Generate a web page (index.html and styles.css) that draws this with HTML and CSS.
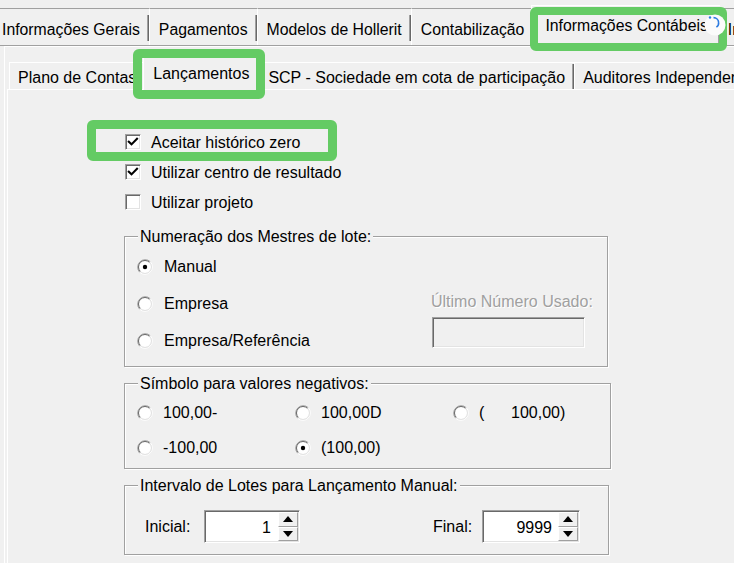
FILE: index.html
```html
<!DOCTYPE html>
<html lang="pt-BR">
<head>
<meta charset="utf-8">
<title>Informações Contábeis</title>
<link rel="stylesheet" href="styles.css">
</head>
<body>
<svg class="defs" width="0" height="0" aria-hidden="true">
  <defs>
    <!-- classic sunken radio button -->
    <symbol id="radio" viewBox="0 0 16 16">
      <circle cx="8" cy="8" r="6" fill="#fff"/>
      <path d="M2.7 13.3A7.5 7.5 0 0 1 13.3 2.7" fill="none" stroke="#a0a0a0"/>
      <path d="M3.4 12.6A6.5 6.5 0 0 1 12.6 3.4" fill="none" stroke="#696969"/>
      <path d="M13.3 2.7A7.5 7.5 0 0 1 2.7 13.3" fill="none" stroke="#ffffff"/>
      <path d="M12.6 3.4A6.5 6.5 0 0 1 3.4 12.6" fill="none" stroke="#e3e3e3"/>
    </symbol>
    <symbol id="radio-on" viewBox="0 0 16 16">
      <use href="#radio"/>
      <circle cx="8" cy="8" r="2.2" fill="#000"/>
    </symbol>
    <symbol id="tick" viewBox="0 0 16 16">
      <path d="M3.2 7.6 6.3 10.7 12.6 4.2" fill="none" stroke="#000" stroke-width="2.4" stroke-linecap="square"/>
    </symbol>
    <symbol id="arrow-up" viewBox="0 0 10 6">
      <path d="M0 6 5 0 10 6Z" fill="#000"/>
    </symbol>
    <symbol id="arrow-down" viewBox="0 0 10 6">
      <path d="M0 0 10 0 5 6Z" fill="#000"/>
    </symbol>
  </defs>
</svg>

<div class="screen">
  <nav class="tabbar tabbar-main">
    <span class="tab tab-first">Informações Gerais</span>
    <span class="tab">Pagamentos</span>
    <span class="tab">Modelos de Hollerit</span>
    <span class="tab">Contabilização</span>
    <span class="tab tab-active">Informações Contábeis</span>
    <span class="tab">Informações Fiscais</span>
  </nav>

  <section class="page">
    <nav class="tabbar tabbar-sub">
      <span class="tab tab-first">Plano de Contas</span>
      <span class="tab tab-active">Lançamentos</span>
      <span class="tab">SCP - Sociedade em cota de participação</span>
      <span class="tab">Auditores Independentes</span>
    </nav>

    <div class="sheet">
      <label class="check">
        <span class="checkbox"><svg><use href="#tick"/></svg></span>
        <span class="caption">Aceitar histórico zero</span>
      </label>
      <label class="check">
        <span class="checkbox"><svg><use href="#tick"/></svg></span>
        <span class="caption">Utilizar centro de resultado</span>
      </label>
      <label class="check">
        <span class="checkbox"></span>
        <span class="caption">Utilizar projeto</span>
      </label>

      <fieldset class="group group-lote">
        <legend>Numeração dos Mestres de lote:</legend>
        <div class="lote-body">
          <div class="radio-list">
            <label class="radio"><svg class="radio-icon"><use href="#radio-on"/></svg><span class="caption">Manual</span></label>
            <label class="radio"><svg class="radio-icon"><use href="#radio"/></svg><span class="caption">Empresa</span></label>
            <label class="radio"><svg class="radio-icon"><use href="#radio"/></svg><span class="caption">Empresa/Referência</span></label>
          </div>
          <div class="last-used">
            <span class="caption caption-disabled">Último Número Usado:</span>
            <div class="edit edit-disabled"></div>
          </div>
        </div>
      </fieldset>

      <fieldset class="group group-neg">
        <legend>Símbolo para valores negativos:</legend>
        <div class="neg-body">
          <label class="radio"><svg class="radio-icon"><use href="#radio"/></svg><span class="caption">100,00-</span></label>
          <label class="radio"><svg class="radio-icon"><use href="#radio"/></svg><span class="caption">100,00D</span></label>
          <label class="radio"><svg class="radio-icon"><use href="#radio"/></svg><span class="caption caption-pre">(      100,00)</span></label>
          <label class="radio"><svg class="radio-icon"><use href="#radio"/></svg><span class="caption">-100,00</span></label>
          <label class="radio"><svg class="radio-icon"><use href="#radio-on"/></svg><span class="caption">(100,00)</span></label>
        </div>
      </fieldset>

      <fieldset class="group group-interval">
        <legend>Intervalo de Lotes para Lançamento Manual:</legend>
        <div class="interval">
          <span class="caption">Inicial:</span>
          <div class="spin spin-start">
            <span class="spin-value">1</span>
            <span class="spin-buttons">
              <span class="spin-btn"><svg><use href="#arrow-up"/></svg></span>
              <span class="spin-btn"><svg><use href="#arrow-down"/></svg></span>
            </span>
          </div>
          <span></span>
          <span class="caption">Final:</span>
          <div class="spin spin-end">
            <span class="spin-value">9999</span>
            <span class="spin-buttons">
              <span class="spin-btn"><svg><use href="#arrow-up"/></svg></span>
              <span class="spin-btn"><svg><use href="#arrow-down"/></svg></span>
            </span>
          </div>
        </div>
      </fieldset>
    </div>
  </section>

  <div class="mark mark-main-tab"></div>
  <div class="mark mark-sub-tab"></div>
  <div class="mark mark-check"></div>

  <svg class="busy-cursor" viewBox="0 0 26 26" aria-hidden="true">
    <circle cx="13" cy="13" r="10.5" fill="#fbfbfb"/>
    <circle cx="8" cy="5.5" r="1.2" fill="#2c7be0"/>
    <path d="M11.5 5.6A5 5 0 0 1 16.6 10.4A5 5 0 0 1 14.4 15.2" fill="none" stroke="#2c7be0" stroke-width="1.6"/>
  </svg>
</div>
</body>
</html>
```

FILE: styles.css
```css
* {
  box-sizing: border-box;
}

html,
body {
  margin: 0;
  padding: 0;
}

body {
  background: #f0f0f0;
  font-family: "Liberation Sans", Arial, sans-serif;
  font-size: 16px;
  color: #000;
}

.defs {
  position: absolute;
  width: 0;
  height: 0;
}

.screen {
  position: relative;
  width: 734px;
  height: 563px;
  overflow: hidden;
  background: #f0f0f0;
}

/* ---------- tab strips ---------- */

.tabbar {
  display: flex;
  align-items: flex-end;
  white-space: nowrap;
}

.tab {
  flex: none;
  line-height: 19px;
  background-color: #f0f0f0;
  border-left: 1px solid #fff;
  border-top: 1px solid #fff;
  /* right-hand shadow edge of each tab */
  background-image:
    linear-gradient(#a0a0a0, #a0a0a0),
    linear-gradient(#696969, #696969);
  background-repeat: no-repeat;
  background-size: 1px 26px, 1px 26px;
}

.tab-active {
  position: relative;
  z-index: 1;
}

.tabbar-main {
  height: 46px;
  padding-top: 8px;
  border-bottom: 1px solid #a0a0a0;
  font-size: 15.8px;
}

.tabbar-main .tab {
  height: 37px;
  padding: 11px 9px 0 9px;
  border-top-color: #a0a0a0;
  background-position: right 1px top 6px, right 0 top 6px;
}

.tabbar-main .tab-first {
  margin-left: -8px;
}

.tabbar-main .tab-active {
  height: 41px;
  margin: 0 -2px -1px;
  padding: 10px 12px 0 13px;
  border-top-color: #fff;
  background-position: right 1px top 3px, right 0 top 3px;
  background-size: 1px 34px, 1px 34px;
}

.page {
  margin-left: 4px;
  padding-left: 2px;
  border-top: 1px solid #fff;
  border-left: 1px solid #fff;
}

.tabbar-sub {
  height: 42px;
}

.tabbar-sub .tab {
  height: 27px;
  padding: 5px 9px 0 8px;
  background-position: right 1px top 1px, right 0 top 1px;
}

.tabbar-sub .tab-first {
  margin-left: 2px;
}

.tabbar-sub .tab-active {
  height: 33px;
  margin: 0 -2px -1px;
  padding: 6px 12px 0 9px;
  background-position: right 1px top 2px, right 0 top 2px;
  background-size: 1px 30px, 1px 30px;
}

/* ---------- page body ---------- */

.sheet {
  height: 480px;
  padding: 37px 0 0 116px;
  border-top: 1px solid #fff;
  border-left: 1px solid #fff;
}

.caption {
  line-height: 19px;
  white-space: nowrap;
}

.caption-pre {
  white-space: pre;
}

.caption-disabled {
  color: #a0a0a0;
  text-shadow: 1px 1px 0 #fff;
}

.check {
  display: flex;
  align-items: center;
  gap: 10px;
  height: 30px;
  padding-left: 1px;
}

.checkbox {
  flex: none;
  width: 16px;
  height: 16px;
  background: #fff;
  border: 1px solid;
  border-color: #a0a0a0 #fff #fff #a0a0a0;
  box-shadow: inset 1px 1px 0 #696969, inset -1px -1px 0 #e3e3e3;
}

.checkbox svg {
  display: block;
  width: 14px;
  height: 14px;
}

.radio {
  display: flex;
  align-items: center;
  gap: 10px;
}

.radio-icon {
  flex: none;
  width: 16px;
  height: 16px;
}

/* etched group boxes */
.group {
  margin: 0;
  padding: 0;
  border: 1px solid #a0a0a0;
  box-shadow: inset 1px 1px 0 #fff, 1px 1px 0 #fff;
  min-width: 0;
}

.group legend {
  margin-left: 13px;
  padding: 0 2px;
  line-height: 19px;
  background: #f0f0f0;
}

.group-lote {
  width: 484px;
  margin-top: 10px;
}

.lote-body {
  display: flex;
  padding: 2px 0 7px 12px;
}

.radio-list {
  width: 294px;
  display: grid;
  grid-auto-rows: 37px;
}

.radio-list .radio {
  gap: 11px;
}

.last-used {
  display: flex;
  flex-direction: column;
  justify-content: flex-end;
  gap: 6px;
  padding-bottom: 11px;
}

.edit {
  margin-left: 1px;
  width: 153px;
  height: 31px;
  border: 1px solid;
  border-color: #a0a0a0 #fff #fff #a0a0a0;
  box-shadow: inset 1px 1px 0 #696969, inset -1px -1px 0 #e3e3e3;
}

.edit-disabled {
  background: #f0f0f0;
}

.group-neg {
  width: 487px;
  margin-top: 7px;
}

.neg-body {
  display: grid;
  grid-template-columns: repeat(3, 158px);
  grid-auto-rows: 35px;
  padding: 2px 0 3px 12px;
}

.group-interval {
  width: 485px;
  margin-top: 7px;
}

.interval {
  display: grid;
  grid-template-columns: 59px 96px 133px 49px 98px;
  align-items: center;
  padding: 15px 0 11px 20px;
}

/* spin edits */
.spin {
  display: flex;
  height: 33px;
  padding: 1px;
  background: #fff;
  border: 1px solid;
  border-color: #a0a0a0 #fff #fff #a0a0a0;
  box-shadow: inset 1px 1px 0 #696969, inset -1px -1px 0 #e3e3e3;
}

.spin-value {
  flex: 1;
  text-align: right;
  line-height: 29px;
  padding: 1px 7px 0 0;
}

.spin-end .spin-value {
  padding-right: 6px;
}

.spin-buttons {
  flex: none;
  width: 20px;
  display: flex;
  flex-direction: column;
}

.spin-btn {
  flex: 1;
  display: flex;
  align-items: center;
  justify-content: center;
  background: #f0f0f0;
  border: 1px solid;
  border-color: #fff #a0a0a0 #a0a0a0 #fff;
}

.spin-btn svg {
  width: 10px;
  height: 6px;
}

/* ---------- highlight frames ---------- */

.mark {
  position: absolute;
  border: 9px solid #64cb64;
  border-radius: 6px;
  z-index: 5;
}

.mark-main-tab {
  left: 530px;
  top: 7px;
  width: 197px;
  height: 44px;
  border-width: 8px;
}

.mark-sub-tab {
  left: 133px;
  top: 49px;
  width: 132px;
  height: 50px;
}

.mark-check {
  left: 87px;
  top: 120px;
  width: 250px;
  height: 41px;
}

.busy-cursor {
  position: absolute;
  left: 702px;
  top: 12px;
  width: 26px;
  height: 26px;
  z-index: 6;
}
```
